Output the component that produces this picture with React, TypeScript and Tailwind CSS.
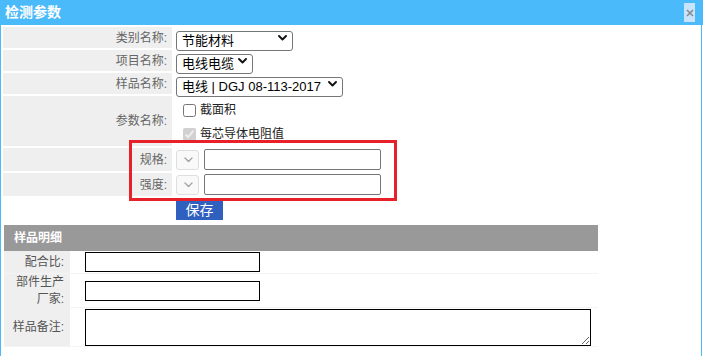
import React from 'react';

const FONT = "font-['Liberation_Sans','Noto_Sans_CJK_SC',sans-serif]";

const Chevron = ({ disabled }: { disabled?: boolean }) => (
  <svg
    className="pointer-events-none absolute right-[6px] top-1/2 -translate-y-1/2"
    width="9"
    height="6"
    viewBox="0 0 9 6"
    fill="none"
  >
    <path
      d="M1 1l3.5 3.5L8 1"
      stroke={disabled ? '#a3a3a3' : '#111'}
      strokeWidth={disabled ? 1.4 : 1.9}
      strokeLinecap="round"
      strokeLinejoin="round"
    />
  </svg>
);

const FakeSelect = ({ value, width }: { value: string; width: string }) => (
  <div className={`relative h-[20px] ${width}`}>
    <select
      defaultValue={value}
      className="h-full w-full appearance-none rounded-[3px] border border-[#767676] bg-white pl-[5px] pr-[16px] text-[13px] leading-[18px] text-black"
    >
      <option>{value}</option>
    </select>
    <Chevron />
  </div>
);

const DisabledSelect = () => (
  <div className="relative h-[20px] w-[23px]">
    <select
      disabled
      className="h-full w-full appearance-none rounded-[3px] border border-[#dedede] bg-[#f9f9f9]"
    />
    <Chevron disabled />
  </div>
);

const Label = ({ children }: { children: React.ReactNode }) => (
  <div className="flex items-center justify-end bg-[#efefef] pr-[5px] text-[12px] text-[#666]">
    {children}
  </div>
);

export default function App() {
  return (
    <div className={`relative h-[356px] w-[703px] overflow-hidden bg-white ${FONT}`}>
      {/* Title bar */}
      <div className="flex h-[25px] items-center justify-between bg-[#4bbafa] pl-[5px] pr-[8px]">
        <span className="text-[14px] font-bold text-white">检测参数</span>
        <button className="flex h-[19px] w-[11px] items-center justify-center bg-[#c7e4fc]">
          <svg width="8" height="8" viewBox="0 0 8 8">
            <path d="M1 1l6 6M7 1L1 7" stroke="#8a8a8a" strokeWidth="1.6" />
          </svg>
        </button>
      </div>

      <div className="h-[331px] w-[702px] border-x border-[#4bbafa]">
        {/* Parameter form */}
        <div className="grid grid-cols-[169px_1fr] gap-[2px] pl-[2px] pt-[2px]">
          <Label>类别名称:</Label>
          <div className="flex h-[21px] items-center pl-[2px]">
            <FakeSelect value="节能材料" width="w-[117px]" />
          </div>

          <Label>项目名称:</Label>
          <div className="flex h-[21px] items-center pl-[2px]">
            <FakeSelect value="电线电缆" width="w-[77px]" />
          </div>

          <Label>样品名称:</Label>
          <div className="flex h-[21px] items-center pl-[2px]">
            <FakeSelect value="电线 | DGJ 08-113-2017" width="w-[167px]" />
          </div>

          <Label>参数名称:</Label>
          <div className="flex h-[50px] flex-col pl-[9px] pt-[2px] text-[12px] text-[#222]">
            <label className="flex h-[24px] items-center gap-[4px]">
              <input type="checkbox" className="h-[13px] w-[13px]" />
              截面积
            </label>
            <label className="flex h-[24px] items-center gap-[4px]">
              <input type="checkbox" checked disabled readOnly className="h-[13px] w-[13px]" />
              每芯导体电阻值
            </label>
          </div>

          <Label>规格:</Label>
          <div className="flex h-[23px] items-center gap-[5px] pl-[2px]">
            <DisabledSelect />
            <input className="h-[21px] w-[177px] rounded-[2px] border border-[#767676] bg-white" />
          </div>

          <Label>强度:</Label>
          <div className="flex h-[23px] items-center gap-[5px] pl-[2px]">
            <DisabledSelect />
            <input className="h-[21px] w-[177px] rounded-[2px] border border-[#767676] bg-white" />
          </div>
        </div>

        <div className="flex pl-[175px] pt-[5px]">
          <button className="flex h-[19px] w-[47px] items-center justify-center bg-[#2f5fbf] text-[14px] text-white">
            保存
          </button>
        </div>

        {/* Sample details */}
        <div className="ml-[3px] mt-[5px] w-[594px]">
          <div className="flex h-[26px] items-center bg-[#999999] pl-[10px] text-[12px] font-bold text-white">
            样品明细
          </div>
          <div className="grid h-[23px] grid-cols-[66px_1fr] border-b border-[#f4f4f4]">
            <div className="flex items-center justify-end bg-[#efefef] pr-[6px] text-[12px] text-[#555]">配合比:</div>
            <div className="flex items-center pl-[15px]">
              <input className="h-[20px] w-[175px] border border-black bg-white" />
            </div>
          </div>
          <div className="grid h-[34px] grid-cols-[66px_1fr] border-b border-[#f4f4f4]">
            <div className="flex items-center justify-end bg-[#efefef] pl-[4px] pr-[6px] text-right text-[12px] leading-[17px] text-[#555]">
              部件生产厂家:
            </div>
            <div className="flex items-center pl-[15px]">
              <input className="h-[20px] w-[175px] border border-black bg-white" />
            </div>
          </div>
          <div className="grid h-[39px] grid-cols-[66px_1fr] border-b border-[#f4f4f4]">
            <div className="flex items-center justify-end bg-[#efefef] pr-[6px] text-[12px] text-[#555]">样品备注:</div>
            <div className="flex items-center pl-[15px]">
              <textarea className="h-[37px] w-[506px] border border-black bg-white" />
            </div>
          </div>
        </div>
      </div>

      {/* Highlight annotation */}
      <div className="absolute left-[129px] top-[140px] h-[61px] w-[268px] border-[3px] border-[#e8202a]" />
    </div>
  );
}
